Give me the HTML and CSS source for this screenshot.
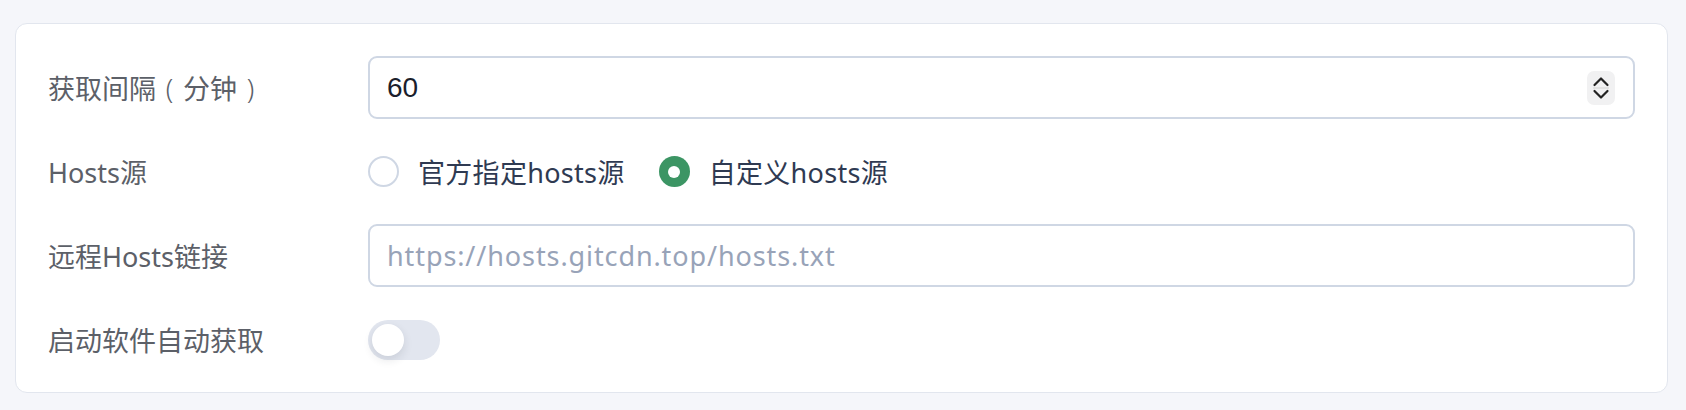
FILE: index.html
```html
<!DOCTYPE html>
<html lang="zh-CN">
<head>
<meta charset="utf-8">
<title>设置</title>
<link rel="stylesheet" href="styles.css">
</head>
<body>
<div class="page">
  <div class="card">
    <div class="row">
      <div class="label">获取间隔<span class="paren">(</span>分钟<span class="paren">)</span></div>
      <div class="control">
        <div class="input">
          <span class="value">60</span>
          <span class="spin">
            <svg width="28" height="34" viewBox="0 0 28 34" aria-hidden="true">
              <polyline points="7.5,14 14,7.5 20.5,14" fill="none" stroke="#222" stroke-width="2.2" stroke-linecap="round" stroke-linejoin="round"/>
              <line x1="6" y1="17" x2="22" y2="17" stroke="#dcdcdc" stroke-width="1.5"/>
              <polyline points="7.5,20 14,26.5 20.5,20" fill="none" stroke="#222" stroke-width="2.2" stroke-linecap="round" stroke-linejoin="round"/>
            </svg>
          </span>
        </div>
      </div>
    </div>
    <div class="row">
      <div class="label">Hosts源</div>
      <div class="control radios">
        <label class="radio"><span class="dot"></span><span class="rtext">官方指定hosts源</span></label>
        <label class="radio checked"><span class="dot"></span><span class="rtext">自定义hosts源</span></label>
      </div>
    </div>
    <div class="row">
      <div class="label">远程Hosts链接</div>
      <div class="control">
        <div class="input"><span class="placeholder">https://hosts.gitcdn.top/hosts.txt</span></div>
      </div>
    </div>
    <div class="row">
      <div class="label">启动软件自动获取</div>
      <div class="control">
        <span class="toggle"><span class="knob"></span></span>
      </div>
    </div>
  </div>
</div>
</body>
</html>
```
FILE: styles.css
```css
html, body {
  margin: 0;
  padding: 0;
  background: #f5f6fa;
}
body {
  font-family: "Noto Sans", "Noto Sans CJK SC", sans-serif;
  width: 1686px;
  height: 410px;
  overflow: hidden;
}
.page {
  padding: 23px 18px 0 15px;
}
.card {
  background: #ffffff;
  border: 1px solid #e2e6ee;
  border-radius: 12px;
  padding: 32px 32px 21px 32px;
  display: flex;
  flex-direction: column;
  gap: 21px;
}
.row {
  display: flex;
  align-items: center;
  height: 63px;
}
.label {
  width: 320px;
  flex: none;
  font-size: 27px;
  color: #5c6068;
  font-family: "Noto Sans", "Noto Sans CJK SC", sans-serif;
}
.paren {
  display: inline-block;
  width: 27px;
  text-align: center;
  font-weight: 300;
}
.control {
  flex: 1;
  display: flex;
  align-items: center;
}
.input {
  flex: 1;
  height: 63px;
  box-sizing: border-box;
  border: 2px solid #cfd7e4;
  border-radius: 9px;
  display: flex;
  align-items: center;
  padding: 0 18px 0 17px;
}
.value {
  flex: 1;
  font-family: "Liberation Sans", Arial, sans-serif;
  font-size: 28px;
  color: #1a202c;
}
.spin {
  display: flex;
  width: 28px;
  height: 34px;
  background: #f1f1f2;
  border-radius: 7px;
}
.placeholder {
  font-family: "Noto Sans", sans-serif;
  font-size: 27px;
  color: #98a3b8;
  letter-spacing: 0.9px;
}
.radios {
  gap: 34px;
}
.radio {
  display: flex;
  align-items: center;
  gap: 19px;
}
.dot {
  width: 31px;
  height: 31px;
  box-sizing: border-box;
  border-radius: 50%;
  border: 2px solid #cfd7e4;
  background: #fff;
  display: flex;
  align-items: center;
  justify-content: center;
}
.radio.checked .dot {
  border: none;
  background: #3c9564;
}
.radio.checked .dot::after {
  content: "";
  width: 12px;
  height: 12px;
  border-radius: 50%;
  background: #fff;
}
.rtext {
  font-size: 27px;
  color: #2f3a52;
  letter-spacing: 0.3px;
}
.toggle {
  width: 72px;
  height: 40px;
  border-radius: 20px;
  background: #e2e6ef;
  display: flex;
  align-items: center;
  padding: 0 4px;
  box-sizing: border-box;
}
.knob {
  width: 32px;
  height: 32px;
  border-radius: 50%;
  background: #fff;
  box-shadow: 0 4px 10px rgba(30, 40, 60, 0.12);
}
```
